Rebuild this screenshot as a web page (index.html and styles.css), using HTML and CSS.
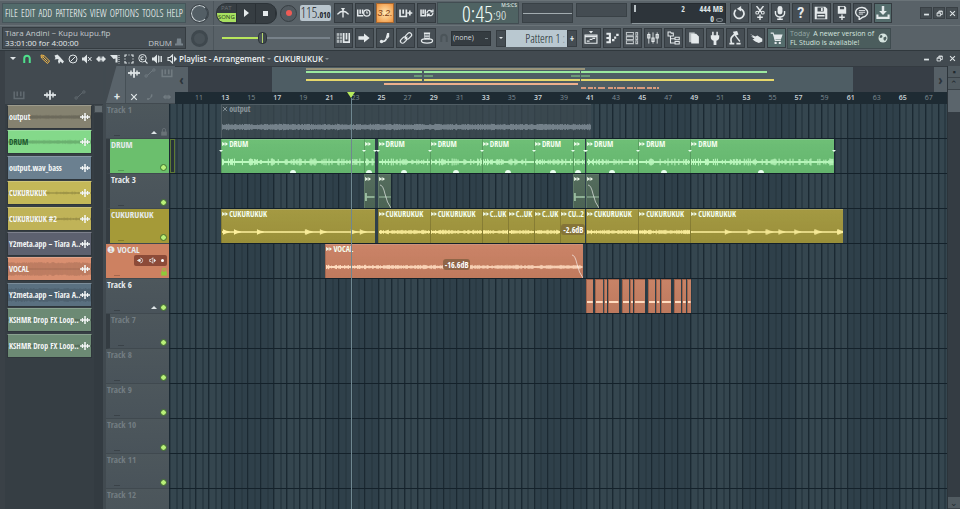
FILE: index.html
```html
<!DOCTYPE html>
<html lang="en">
<head>
<meta charset="utf-8">
<title>Playlist - Arrangement</title>
<link rel="stylesheet" href="styles.css">
</head>
<body>
<svg class="sprite" aria-hidden="true">
  <symbol id="i-wave" viewBox="0 0 20 20"><path d="M0 10h20" stroke-width="3"/><path d="M5 6v8M15 6v8" stroke-width="2.400"/><path d="M10 2v16" stroke-width="3"/></symbol>
  <symbol id="i-auto" viewBox="0 0 20 20"><circle cx="3.500" cy="15" r="2"/><circle cx="16.500" cy="5" r="2"/><path d="M5 14Q9 12 10 10T15 6"/></symbol>
  <symbol id="i-piano" viewBox="0 0 20 20"><path d="M2 4v12h16V4M7 4v8M13 4v8" stroke-width="2.500"/></symbol>
  <symbol id="i-metro" viewBox="0 0 20 20"><path d="M2 12Q6 7.500 10 7.500T18 12M10 5.500v11" stroke-width="2"/><path class="f" d="M7 3h6l-3 4z"/></symbol>
  <symbol id="i-wait" viewBox="0 0 20 20"><path d="M1 5v9h8M4.500 5v6M8 5v6" stroke-width="2.200"/><circle cx="14" cy="10" r="4.500" stroke-width="1.800"/><path d="M14 7.500V10h2"/></symbol>
  <symbol id="i-overdub" viewBox="0 0 20 20"><path d="M1.500 5v10h9V5M6 5v6M12 10h7M15.500 6.500v7" stroke-width="2.400"/></symbol>
  <symbol id="i-looprec" viewBox="0 0 20 20"><path d="M1.500 5v9h6V5M4.500 5v6" stroke-width="2.200"/><path d="M10 10a4 4 0 0 1 7-2.500M18.500 10a4 4 0 0 1-7 2.500M15 8.500h3.500V5M14 11.500h-3.500V15" stroke-width="1.800"/></symbol>
  <symbol id="i-step" viewBox="0 0 20 20"><path class="f" opacity=".65" d="M1 3h8v14H1z"/><path d="M1 7.500h8M1 12h8M5 3v14" stroke="#39434a" stroke-width=".8"/><path d="M11 3v13h8V3M15 3v9" stroke-width="2.400"/></symbol>
  <symbol id="i-arrow" viewBox="0 0 20 20"><path class="f" d="M2 7.500h8V3.500l8 6.500-8 6.500v-4H2z"/></symbol>
  <symbol id="i-slide" viewBox="0 0 20 20"><path d="M4 15h3Q11 14.500 12 10.500" stroke-width="2.500"/><circle class="f" cx="5" cy="15" r="2.400"/><path class="f" d="M13 3h3v5l-2 3-3-1z"/></symbol>
  <symbol id="i-link" viewBox="0 0 20 20"><rect x="8.500" y="4" width="10" height="6" rx="3" transform="rotate(-45 13.500 7)" stroke-width="1.800"/><rect x="1.500" y="10" width="10" height="6" rx="3" transform="rotate(-45 6.500 13)" stroke-width="1.800"/><path d="M8 12l4-4"/></symbol>
  <symbol id="i-hat" viewBox="0 0 20 20"><path class="f" d="M5.500 2h9l-1 10h-7z"/><ellipse cx="10" cy="14" rx="8" ry="3.200" stroke-width="1.800"/><path d="M6.500 5.500h7M7 9h6" stroke="#59636a"/></symbol>
  <symbol id="i-playlist" viewBox="0 0 20 20"><path class="f" d="M7 0h6l-3 3.500z"/><path d="M1.500 6h17v11.500h-17zM1.500 8h17M4 14.500h4M8 12h4M12 10.500h4" stroke-width="1.700"/></symbol>
  <symbol id="i-roll" viewBox="0 0 20 20"><path d="M2 4h5M2 10h5M2 16h5M7 2.500v15" stroke-width="3"/><path d="M10 13h3.500M13 9.500h3M16 5.500h3.500" stroke-width="3"/></symbol>
  <symbol id="i-rack" viewBox="0 0 20 20"><path d="M2 2h10v4H2zM2 8h10v4H2zM2 14h10v4H2zM15.500 2h2.500v4h-2.500zM15.500 8h2.500v4h-2.500zM15.500 14h2.500v4h-2.500z" opacity=".75"/></symbol>
  <symbol id="i-mixer" viewBox="0 0 20 20"><path d="M4 2v16M10 2v16M16 2v16" stroke-width="1.200"/><path d="M2.500 5h3v5h-3zM8.500 10h3v5h-3zM14.500 5h3v5h-3z" stroke-width="1.600"/></symbol>
  <symbol id="i-tree" viewBox="0 0 20 20"><path d="M1.500 1.500h3.500l1 1.500h3v4h-7.500zM5 8v9h6M5 11h6M11.500 9h6v3.500h-6zM11.500 15h6v3.500h-6z"/></symbol>
  <symbol id="i-pages" viewBox="0 0 20 20"><path class="f" d="M3 2h8v14H3z" opacity=".7"/><path class="f" d="M6 4h7l4 4v10H6z"/></symbol>
  <symbol id="i-plug" viewBox="0 0 20 20"><path class="f" d="M4 6h12v3q0 4-4 5v6H8v-6q-4-1-4-5z"/><path d="M7 1v6M13 1v6" stroke-width="2.200"/></symbol>
  <symbol id="i-arm" viewBox="0 0 20 20"><path d="M2 18h7M12 18h6M5 17Q3 11 6 8l4-4" stroke-width="2.400"/><path class="f" d="M7 1l6-1 2 5-5 2z"/><path d="M10 6l7 9" stroke-width="1.800"/></symbol>
  <symbol id="i-hand" viewBox="0 0 20 20"><path class="f" d="M1 4l8 4 3-1.500 7 4.500v4l-5 2-5-2-4-3 3-1-2-1.500-3-1.500 3-.5z"/></symbol>
  <symbol id="i-cart" viewBox="0 0 20 20"><path class="f" d="M5 5h13l-2.500 7H7z"/><path d="M1 3h3.500l3 10.500h8"/><circle class="f" cx="8" cy="17" r="1.700"/><circle class="f" cx="14" cy="17" r="1.700"/></symbol>
  <symbol id="i-undo" viewBox="0 0 20 20"><path d="M5.500 5.500A7 7 0 1 0 12 4" stroke-width="2.500"/><path class="f" d="M13 0v8L7 4z"/></symbol>
  <symbol id="i-cut" viewBox="0 0 20 20"><path d="M5 0l7 9M15 0L8 9M10 12v8M6 16h8" stroke-width="2"/><circle cx="6" cy="9.500" r="2"/><circle cx="14" cy="9.500" r="2"/></symbol>
  <symbol id="i-mic" viewBox="0 0 20 20"><rect class="f" x="6.500" y="0" width="7" height="12" rx="3.500"/><path d="M3.500 7v3.500a6.500 5 0 0 0 13 0V7M10 15v4M6 19h8" stroke-width="2"/></symbol>
  <symbol id="i-save" viewBox="0 0 20 20"><path class="f" fill-rule="evenodd" d="M1 1h15l3 3v15H1zM5 2v6h9V2zM4 11v7h12v-7z"/><path class="f" d="M10 3h2.500v4H10zM5 13h10v2H5z"/></symbol>
  <symbol id="i-savenew" viewBox="0 0 20 20"><path class="f" fill-rule="evenodd" d="M4 0h10l2 2v9H4zM7 1v3.500h6V1z"/><path d="M10 12v8M6 16h8" stroke-width="2"/></symbol>
  <symbol id="i-chat" viewBox="0 0 20 20"><path d="M6 15.500A8.500 7 0 1 1 11 16L6 19.500z" stroke-width="2"/><path d="M5.500 6.500h9M5.500 9h9M5.500 11.500h6" stroke-width="1.300"/></symbol>
  <symbol id="i-down" viewBox="0 0 20 20"><path d="M10 0v8" stroke-width="3.500"/><path class="f" d="M4.500 7h11L10 13z"/><path d="M2 12v5h16v-5" stroke-width="3"/></symbol>
  <symbol id="i-magnet" viewBox="0 0 20 20"><path d="M4.500 18V9a5.500 5.500 0 0 1 11 0v9" stroke-width="4"/></symbol>
  <symbol id="i-pencil" viewBox="0 0 20 20"><path d="M2 2l6 1 11 11-4 5L3 8zM5 5l10 10M8 3L3 8" stroke-width="2"/></symbol>
  <symbol id="i-brush" viewBox="0 0 20 20"><path class="f" d="M1 3l6-2 5 5-3 4-8 1 2-3zM9 10l3-4 8 9-3 4-4-4-3 5-2-5z"/></symbol>
  <symbol id="i-ban" viewBox="0 0 20 20"><circle cx="10" cy="10" r="8" stroke-width="2"/><path d="M15 5L5 15" stroke-width="2"/></symbol>
  <symbol id="i-mute" viewBox="0 0 20 20"><path class="f" d="M0 7h4l6-6v18l-6-6H0z"/><path d="M12 6l7 8M19 6l-7 8" stroke-width="2"/></symbol>
  <symbol id="i-slip" viewBox="0 0 20 20"><path d="M2 10h16M7.500 5v10M12.500 5v10" stroke-width="2.500"/><path class="f" d="M6 4v12l-6-6zM14 4v12l6-6z"/></symbol>
  <symbol id="i-knife" viewBox="0 0 20 20"><path class="f" d="M0 2h15v15h-4V9L7 10z"/><path d="M18 2v17" stroke-width="2" stroke-dasharray="2 2"/></symbol>
  <symbol id="i-select" viewBox="0 0 20 20"><path d="M2 6V2h4M14 2h4v4M18 14v4h-4M6 18H2v-4M9 2h2M9 18h2M2 9v2M18 9v2" stroke-width="2.300"/></symbol>
  <symbol id="i-zoom" viewBox="0 0 20 20"><circle cx="9" cy="8.500" r="7.500" stroke-width="2"/><path d="M14 14l5 5M11 6.500a3 3 0 1 0 0 4" stroke-width="2.200"/></symbol>
  <symbol id="i-play" viewBox="0 0 20 20"><path class="f" d="M0 7h4l6-6v18l-6-6H0z"/><path d="M13 3v14M16 4v12M19 4v12" stroke-width="1.800"/></symbol>
  <symbol id="i-speaker" viewBox="0 0 20 20"><path d="M2 7h4l5-5v16l-5-5H2z" stroke-width="2.200"/><path class="f" d="M14 4l6 6-6 6z"/></symbol>
  <symbol id="i-monitor" viewBox="0 0 20 20"><circle class="f" cx="7" cy="10" r="4"/><path d="M9 3a7 7 0 1 1 0 14M0 10h5" stroke-width="2"/></symbol>
  <symbol id="i-min" viewBox="0 0 20 20"><path d="M3 13h14" stroke-width="5"/></symbol>
  <symbol id="i-restore" viewBox="0 0 20 20"><path d="M3 8h10v9H3zM3 9h10M8 7V3h10v10h-4M8 4h10" stroke-width="2.500"/></symbol>
  <symbol id="i-close" viewBox="0 0 20 20"><path d="M3 3l14 14M17 3L3 17" stroke-width="3"/></symbol>
  <symbol id="i-lock" viewBox="0 0 20 20"><path class="f" d="M3 9h14v10H3z"/><path d="M6 10V5a4 4 0 0 1 8 0v5" stroke-width="2"/></symbol>
  <symbol id="i-globe" viewBox="0 0 20 20"><circle class="f" cx="10" cy="10" r="9"/><path d="M4 5l4-1 1 4-3 2-3-1zM11 9l5-2 1 4-3 5-3-3z" fill="#4d605f" stroke="none"/></symbol>
  <symbol id="i-clip" viewBox="0 0 20 20"><path d="M2 4v12M10 5v10" stroke-width="3"/><path class="f" d="M3 5l6 5-6 5zM12 4l8 6-8 6z"/></symbol>
  <symbol id="i-stack" viewBox="0 0 20 20"><path class="f" d="M5 1h10l1 13h4v5H0v-5h4z"/></symbol>
</svg>

<header class="toolbar">
  <div class="bar">
    <nav class="menu" aria-label="Main menu">
      <button>FILE</button><button>EDIT</button><button>ADD</button><button>PATTERNS</button><button>VIEW</button><button>OPTIONS</button><button>TOOLS</button><button>HELP</button>
    </nav>
    <div class="knob-cell"><div class="knob lit"></div></div>
    <div class="transport">
      <div class="deck">
        <button class="mode"><span class="pat">PAT</span><span class="song">SONG</span></button>
        <button class="deck-btn" aria-label="Play"><span class="tri"></span></button>
        <button class="deck-btn" aria-label="Stop"><span class="sq"></span></button>
      </div>
      <button class="record" aria-label="Record"><span></span></button>
      <button class="tempo"><b>115</b><small>.010</small></button>
    </div>
    <div class="icons five" data-icons="metro wait count overdub looprec"></div>
    <div class="clock"><span>0:45</span><div><em>M:S:CS</em><small>:90</small></div></div>
    <div class="scopes"><div class="scope"><hr></div><div class="scope short"></div></div>
    <div class="cpu"><span class="cpu-tick"></span><span class="voices">2</span><span class="mem">444 MB<br>0 <i></i></span></div>
    <div class="icons eight" data-icons="undo cut mic help save savenew chat down*"></div>
    <div class="window-btns app" data-window></div>
  </div>
  <div class="bar">
    <div class="hint">
      <span>Tiara Andini ~ Kupu kupu.flp</span>
      <div><span>33:01:00 for 4:00:00</span><span class="hint-name">DRUM <svg><use href="#i-stack"/></svg></span></div>
    </div>
    <div class="knob-cell"><div class="knob"></div></div>
    <div class="transport"><input class="slider" type="range" min="0" max="100" value="36" aria-label="Song position"></div>
    <div class="icons five" data-icons="step arrow slide link hat"></div>
    <div class="pattern">
      <svg class="snap"><use href="#i-magnet"/></svg>
      <select class="none" aria-label="Snap"><option>(none)</option></select>
      <button class="pbtn" aria-label="Pattern menu"><span class="caret"></span></button>
      <button class="pname">Pattern 1 <i>:</i></button>
      <button class="pbtn">+</button>
    </div>
    <div class="icons ten" data-icons="playlist roll rack mixer tree pages plug arm hand cart*"></div>
    <a class="news" href="#"><span><i>Today</i>&ensp;A newer version of<br>FL Studio is available!</span><svg><use href="#i-globe"/></svg></a>
  </div>
</header>

<main class="window">
  <div class="titlebar">
    <div class="tools" id="tools"></div>
    <h1>Playlist - Arrangement</h1><span class="caret dim"></span><h1>CUKURUKUK</h1><span class="caret dim"></span>
    <div class="window-btns" data-window></div>
  </div>
  <div class="body">
    <aside class="picker">
      <div class="picker-tabs"><svg class="off"><use href="#i-piano"/></svg><svg><use href="#i-wave"/></svg><svg class="off"><use href="#i-auto"/></svg></div>
      <div class="picker-main"><div class="sources" id="sources"></div><div class="vscroll"><span></span></div></div>
    </aside>
    <section class="playlist">
      <div class="head">
        <div class="corner">
          <div class="add">+</div>
          <div class="corner-grid"><svg><use href="#i-wave"/></svg><svg class="off"><use href="#i-auto"/></svg><svg class="off"><use href="#i-piano"/></svg><svg class="small"><use href="#i-close"/></svg><svg class="off small"><use href="#i-slide"/></svg><svg class="off small"><use href="#i-slip"/></svg></div>
        </div>
        <div class="timebar">
          <div class="overview"><button aria-label="Scroll left">‹</button><div class="map" id="map"></div><button aria-label="Scroll right">›</button></div>
          <div class="ruler"></div>
        </div>
      </div>
      <div class="arrange">
        <div class="headers" id="headers"></div>
        <div class="lanes" id="lanes"></div>
      </div>
    </section>
    <div class="rail"><div class="dot">▪</div><div class="up">⌃</div><div class="track"><span></span></div><div class="up">⌄</div></div>
  </div>
</main>
<script src="app.js"></script>
</body>
</html>
```

FILE: styles.css
```css
* { box-sizing: border-box; }
:root {
  --span: 59.7;
  --row: 35px;
  --ui: "Open Sans Condensed", "Roboto Condensed", Roboto, sans-serif;
  --light: "Open Sans Condensed Light", "Open Sans Condensed", Roboto, sans-serif;
}
html, body { height: 100%; }
body { margin: 0; display: flex; flex-direction: column; overflow: hidden; background: #41494f; color: #dfe5e7; font-family: var(--ui); font-size: 9px; line-height: 12px; }
button, select, input { margin: 0; padding: 0; border: 0; background: none; color: inherit; font: inherit; }
svg { fill: none; stroke: currentColor; stroke-width: 1.5; width: 10px; height: 10px; flex: none; }
.f { fill: currentColor; stroke: none; }
.sprite { position: absolute; width: 0; height: 0; }
i { font-style: normal; }
h1 { margin: 0; font: 600 8px/12px "Open Sans", sans-serif; color: #eef2f3; }
.caret { border: 3px solid transparent; border-top: 3px solid currentColor; border-bottom: 0; }
.caret.dim { color: #8a9397; border-width: 2px; border-bottom: 0; margin: 0 3px 0 2px; }

/* toolbar */
.toolbar { flex: none; background: #596268; border-bottom: 1px solid #30383d; }
.bar { display: flex; height: 25px; align-items: center; padding-left: 2px; border-top: 1px solid #6a7378; }
.menu { width: 184px; height: 20px; background: #526b6b; border: 1px solid #46555a; display: flex; justify-content: space-between; align-items: center; padding: 0 2px; font: 10px/16px var(--light); color: #fff; }
.hint { width: 184px; height: 22px; background: #454d53; border: 1px solid #353c41; padding: 0 2px; font: 8px/10px "Open Sans", sans-serif; color: #c4cacd; white-space: nowrap; }
.hint div { display: flex; justify-content: space-between; color: #e4e9eb; }
.hint-name { display: flex; gap: 3px; color: #c4cacd; }
.hint-name svg { width: 8px; height: 8px; color: #77828a; }
.knob-cell { width: 27px; display: flex; justify-content: center; }
.knob { width: 17px; height: 17px; border-radius: 50%; background: #4a5359; border: 3px solid #3f484e; }
.knob.lit { border: 1px solid #c9d1d4; border-right-color: #39424a; background: #535e65; outline: 1px solid #3c444a; }
.transport { width: 120px; height: 100%; display: flex; align-items: center; padding: 0 2px; border-left: 1px solid #4c555b; }
.deck { display: flex; height: 21px; width: 61px; border-radius: 10px; overflow: hidden; background: #363d42; border: 1px solid #2c3338; flex: none; }
.deck > * { flex: 1; display: flex; align-items: center; justify-content: center; border-right: 1px solid #2a3035; }
.mode { flex-direction: column; font: 6px/9px "Open Sans", sans-serif; align-items: stretch; text-align: center; }
.pat { color: #697075; }
.song { background: #a8e060; color: #25381c; border-radius: 0 0 0 6px; }
.tri { border: 4px solid transparent; border-left: 5px solid #e6ebed; border-right: 0; }
.sq { width: 5px; height: 5px; background: #e6ebed; }
.record { width: 17px; height: 17px; border-radius: 50%; border: 1px solid #373e43; background: #525a60; margin: 0 3px; flex: none; display: grid; place-items: center; }
.record span { width: 6px; height: 6px; border-radius: 50%; background: #ee5b55; }
.tempo { flex: 1; height: 16px; background: #b9c5cd; color: #18222a; border-radius: 2px; display: flex; align-items: baseline; justify-content: center; }
.tempo b { font: 14px/15px var(--light); }
.tempo small { font: 8px/10px var(--ui); }
.slider { appearance: none; width: 108px; height: 14px; margin-left: 6px; background: linear-gradient(90deg, #b8e65c 36%, #78828a 36%) center / 100% 2px no-repeat; }
.slider::-webkit-slider-thumb { appearance: none; width: 9px; height: 12px; border-radius: 4px; border: 1px solid #2d3439; background: linear-gradient(90deg, #4b5459 3px, #b4d66b 3px 4px, #3e474c 4px); }
.icons { display: grid; gap: 2px; grid-auto-flow: column; grid-auto-columns: 1fr; padding: 0 1px; }
.icons button { height: 20px; background: #464e54; border: 1px solid #343b40; color: #e4e9eb; display: grid; place-items: center; }
.icons svg { width: 14px; height: 14px; }
.icons .active { background: #546c6c; }
.icons .count { background: radial-gradient(#ffe9b5, #f0913a); color: #7c3a12; font: italic 9px/10px "Liberation Sans", sans-serif; border-color: #a7672f; }
.icons .help { font: bold 14px/16px Roboto, sans-serif; }
.five { width: 104px; }
.eight { width: 164px; margin-left: 3px; }
.ten { width: 206px; }
.clock { width: 82px; height: 22px; background: #4f6363; border: 1px solid #424d52; color: #f0fcf7; display: flex; justify-content: flex-end; padding-right: 1px; font: 22px/20px var(--light); }
.clock div { display: flex; flex-direction: column; width: 24px; }
.clock small { font-size: 13px; line-height: 16px; }
.clock em { align-self: flex-end; font: normal 5px/4px "Open Sans", sans-serif; }
.scopes { display: flex; gap: 3px; width: 112px; padding: 0 3px; border-right: 1px solid #4a5358; }
.scope { flex: 1; height: 20px; background: #444c52; border: 1px solid #394146; display: flex; align-items: center; }
.scope.short { height: 14px; }
.scope hr { border: 0; height: 1px; background: #a3acb0; width: 100%; margin: 0; }
.cpu { width: 95px; height: 21px; background: #2d343a; border: 1px solid #252b30; border-bottom: 1px solid #8c969b; display: flex; justify-content: space-between; padding: 0 2px; font-size: 8px; line-height: 10px; }
.cpu-tick { width: 2px; height: 7px; background: #b8c0c4; margin-top: 1px; }
.voices { flex: 1; text-align: right; }
.mem { width: 38px; text-align: right; }
.mem i { display: inline-block; width: 7px; height: 4px; border: 1px solid #788187; border-radius: 50%; }
.window-btns { margin-left: auto; display: flex; gap: 1px; padding-right: 2px; }
.window-btns button { width: 12px; height: 12px; display: grid; place-items: center; }
.window-btns.app button { background: #454d52; border: 1px solid #394045; }
.window-btns svg { width: 7px; height: 7px; }
.pattern { width: 144px; display: flex; align-items: center; height: 18px; }
.snap { color: #4b5459; margin: 0 2px 0 2px; }
.none { appearance: none; width: 40px; height: 15px; background: linear-gradient(#7b858b, #7b858b) 33px 6px / 3px 1px no-repeat #353c41; border: 1px solid #2d3338; color: #d4dadd; padding-left: 1px; font: 7px/12px "Open Sans", sans-serif; margin-right: 5px; }
.pbtn { width: 10px; height: 17px; background: #444c52; border: 1px solid #363d42; display: grid; place-items: center; font-size: 10px; }
.pbtn .caret { border-width: 2px; border-bottom: 0; }
.pname { flex: 1; height: 17px; background: #b9c8d0; color: #141e26; text-align: right; padding-right: 2px; font: 12px/15px var(--light); white-space: nowrap; }
.pbtn:last-child { margin-right: 4px; }
.pname i { color: #7d8b93; }
.news { flex: none; width: 104px; height: 21px; background: #4b5d5d; border: 1px solid #3f4b4f; color: #d5e4df; text-decoration: none; display: flex; align-items: center; justify-content: space-between; padding: 0 2px; font: 7px/9px "Open Sans", sans-serif; white-space: nowrap; }
.news i { color: #97a8a7; }

/* playlist window */
.window { flex: 1; min-height: 0; display: flex; flex-direction: column; border-left: 5px solid #3a4147; }
.titlebar { flex: none; height: 15px; display: flex; align-items: center; background: #424a50; }
.tools { display: flex; align-items: center; gap: 3px; margin: 0 2px 0 5px; }
.tools button { width: 11px; height: 11px; display: grid; place-items: center; }
.tools svg { width: 10px; height: 10px; }
.tools .green { color: #4fe08c; margin: 0 4px 0 2px; }
.amber { color: #f0b648; }
.tools .gap { margin-left: 1px; }
.body { flex: 1; min-height: 0; display: flex; }
.picker { width: 98px; flex: none; display: flex; flex-direction: column; background: #363e44; }
.picker-tabs { height: 38px; flex: none; background: #424a50; display: flex; justify-content: space-between; align-items: flex-end; padding: 0 17px 3px 8px; }
.picker-tabs svg { width: 12px; height: 12px; }
.off { color: #626b71; }
.picker-main { flex: 1; display: flex; gap: 2px; padding: 1px 0 0 2px; }
.sources { width: 85px; height: 254px; display: grid; grid-auto-rows: 1fr; }
.source { position: relative; display: flex; align-items: center; justify-content: space-between; height: 24px; padding: 0 1px; border: 1px solid #2f363b; border-top-color: #ffffff33; font-size: 8px; color: #f4f7f7; text-align: left; white-space: nowrap; overflow: hidden; }
.source .dark { color: #1c5a2c; }
.source span, .source .ico { position: relative; }
.source .ico { width: 10px; height: 10px; }
.source .wf { position: absolute; inset: 4px 0; width: 100%; height: 14px; color: #00000028; }
.vscroll { width: 9px; background: #333b41; }
.vscroll span { display: block; height: 8px; background: #626b70; border: 1px solid #41494e; }
.playlist { flex: 1; min-width: 0; display: flex; flex-direction: column; border-left: 3px solid #414a50; }
.head { flex: none; height: 38px; display: flex; }
.corner { width: 69px; flex: none; display: flex; padding-bottom: 1px; background: #424a50; }
.add { width: 19px; background: #59636a; clip-path: polygon(55% 0, 100% 0, 100% 100%, 0 100%); display: flex; align-items: flex-end; justify-content: flex-end; padding: 0 5px 0 0; font: bold 11px/12px Roboto, sans-serif; }
.corner-grid { flex: 1; background: #566067; border-left: 1px solid #465056; display: grid; grid-template-columns: repeat(3, 1fr); align-content: space-between; justify-items: center; padding: 1px 0 0 0; }
.corner-grid svg { width: 12px; height: 12px; }
.corner-grid .small { width: 8px; height: 12px; }
.corner-grid .off { color: #727c82; }
.timebar { flex: 1; min-width: 0; display: flex; flex-direction: column; }
.overview { height: 26px; display: flex; border-top: 1px solid #343b41; }
.overview button { width: 13px; background: #566067; color: #2c343a; font-size: 14px; }
.map { position: relative; flex: 1; background: #373e46; }
.map .view { position: absolute; top: 0; bottom: 0; background: #4e5d64; }
.map .mini { position: absolute; height: 2px; }
.ruler { flex: 1; background: #1e2b33; }
.arrange { position: relative; flex: 1; min-height: 0; display: flex; }
.headers { width: 63px; flex: none; overflow: hidden; }
.th { position: relative; height: var(--row); background: linear-gradient(#4d575c, #49535a); border-bottom: 1px solid #40494f; padding: 0 1px; color: #e6ebed; font-size: 9px; line-height: 12px; }
.th.child { border-left: 4px solid #343c42; }
.th.idle { color: #737d82; }
.th::after { content: ""; position: absolute; left: 8px; bottom: 2px; width: 6px; height: 1px; background: #0003; }
.led { position: absolute; right: 3px; bottom: 3px; width: 5px; height: 5px; border-radius: 50%; background: #b8f078; outline: 1px solid #4b7a34; }
.th .lock { position: absolute; right: 1px; bottom: 1px; width: 8px; height: 10px; color: #697277; }
.th .lock.on { color: #8fc93a; }
.fold { position: absolute; right: 12px; bottom: 4px; border: 3px solid transparent; border-bottom: 3px solid #dfe5e7; border-top: 0; }
.pill { position: absolute; right: 2px; top: 11px; width: 33px; height: 11px; border-radius: 2px; background: #8c4a38; display: flex; align-items: center; justify-content: space-around; }
.pill svg { width: 7px; height: 7px; }
.pill i { width: 3px; height: 3px; border-radius: 50%; background: #fff; }
.lanes { position: relative; flex: 1; min-width: 0; }
.grid { position: absolute; inset: 0; background:
  repeating-linear-gradient(180deg, transparent 0 34px, #14212a 34px 35px),
  repeating-linear-gradient(90deg, #1b2932 0 1px, transparent 1px calc(100% / var(--span))),
  repeating-linear-gradient(90deg, #2a3a43 0 2px, transparent 2px calc(50% / var(--span))),
  repeating-linear-gradient(90deg, #35464f 0 calc(400% / var(--span)), #2f404a 0 calc(800% / var(--span))); }
.tick { position: absolute; top: -12px; font: 7px/12px "Open Sans", sans-serif; color: #7f8c93; }
.tick.major { color: #ccd4d8; font-weight: 600; }
.clip { position: absolute; height: 34px; overflow: hidden; border-left: 1px solid #00000028; border-top: 1px solid #ffffff30; background-image: linear-gradient(#ffffff08, #0000000c); }
.clip header { display: flex; align-items: center; gap: 1px; height: 8px; font-size: 8px; line-height: 8px; color: #f4fff0; white-space: nowrap; }
.clip header svg { width: 6px; height: 6px; }
.clip .wf { position: absolute; left: 0; top: 12px; width: 100%; height: 20px; }
.clip .fade { position: absolute; right: 0; bottom: 0; width: 12px; height: 24px; color: #ffffff99; stroke-width: 1; }
.wf { stroke-width: 1; }
.drum { background-color: #69bd72; color: #c1fcc3; }
.cuku { background-color: #a1963c; color: #fff2a0; }
.vocal { background-color: #c98062; color: #ffdcc0; }
.chop { background-color: #c67f62; color: #ffdcc0; border-color: #a0624a; }
.chop .wf { stroke-width: 2; }
.fx { background-color: #4f6858; color: #9fc2a5; border-color: #5d7866; }
.muted { background: #3f4b52b8; color: #74818a; border-color: #505d64; }
.muted header { color: #8b969c; }
.marker { position: absolute; border: 2px solid transparent; border-top: 2px solid #eafff0; border-bottom: 0; margin-left: -2px; }
.dome { position: absolute; width: 6px; height: 3px; border-radius: 3px 3px 0 0; background: #eafff0; margin-left: -3px; }
.badge { position: absolute; padding: 0 2px; border-radius: 3px; background: #857438; color: #fff; font-size: 8px; line-height: 11px; }
.badge.warm { background: #8f6547; }
.playhead { position: absolute; top: -6px; bottom: 0; width: 1px; background: #6f8790; }
.playhead::before { content: ""; position: absolute; left: -4px; top: -6px; border: 4px solid transparent; border-top: 6px solid #b6ec5c; border-bottom: 0; }
.meter { position: absolute; left: 1px; width: 5px; height: 34px; border: 1px solid #5d7a35; background: #27323a; }
.rail { width: 13px; flex: none; display: flex; flex-direction: column; background: #343c43; border-left: 1px solid #2c343a; }
.rail .dot, .rail .up { height: 12px; background: #515b61; color: #20282e; text-align: center; border-bottom: 1px solid #3a4248; }
.rail .track { flex: 1; }
.rail .track span { display: block; height: 22px; background: #5b656c; }
```

FILE: app.js
```js
const START = 9, SPAN = 59.7, ROW = 35;
const icon = (name, cls = "") => `<svg class="${cls}"><use href="#i-${name}"/></svg>`;
const at = bar => ((bar - START) / SPAN * 100) + "%";
const width = (a, b) => ((b - a) / SPAN * 100) + "%";

let seed = 7;
function rand() {
  seed = (seed * 16807) % 2147483647;
  return seed / 2147483647;
}

// One vertical stroke per pixel; each kind has its own envelope.
function wave(px, kind) {
  let d = "M0 10H" + px, hit = 1;
  for (let x = 0; x < px; x++) {
    let h;
    if (kind === "drum") h = rand() < 0.45 ? 2 + rand() * 1.6 : 1;
    else if (kind === "sparse") { hit = rand() < 0.07 ? 2.6 : hit * 0.8; h = Math.max(hit, 0.5); }
    else if (kind === "flat") h = 2 + rand() * 1.2;
    else if (kind === "hit") h = x < 2 ? 4 : 0.7;
    else if (kind === "full") h = 8 + rand() * 2;
    else h = 0.8 + rand() * 1.4;
    d += `M${x + 0.5} ${(10 - h).toFixed(1)}V${(10 + h).toFixed(1)}`;
  }
  return `<svg class="wf" viewBox="0 0 ${px} 20" preserveAspectRatio="none"><path d="${d}"/></svg>`;
}

document.querySelectorAll("[data-icons]").forEach(box => {
  box.innerHTML = box.dataset.icons.split(" ").map(raw => {
    const name = raw.replace("*", "");
    if (name === "count") return `<button class="count">3.2.</button>`;
    if (name === "help") return `<button class="help">?</button>`;
    return `<button class="${raw.endsWith("*") ? "active" : ""}" aria-label="${name}">${icon(name)}</button>`;
  }).join("");
});
document.querySelectorAll("[data-window]").forEach(box => {
  box.innerHTML = ["min", "restore", "close"].map(n => `<button aria-label="${n}">${icon(n)}</button>`).join("");
});
document.getElementById("tools").innerHTML = `<span class="caret"></span>` +
  [["magnet", "green"], ["pencil", "amber"], ["brush"], ["ban"], ["mute"], ["slip"], ["knife"], ["select"], ["zoom"], ["play"], ["speaker", "gap"]]
    .map(([n, c = ""]) => `<button class="${c}" aria-label="${n}">${icon(n)}</button>`).join("");

const sources = [
  ["output", "#858270", "flat"], ["DRUM", "#84d98a", "flat"], ["output.wav_bass", "#6b8090", ""],
  ["CUKURUKUK", "#c4b858", "soft"], ["CUKURUKUK #2", "#c0b358", "soft"], ["Y2meta.app – Tiara A..", "#5d616f", ""],
  ["VOCAL", "#d98f70", "full"], ["Y2meta.app – Tiara A..", "#5a7080", "full"],
  ["KSHMR Drop FX Loop..", "#6c8a74", "soft"], ["KSHMR Drop FX Loop..", "#6c8a74", "soft"]
];
document.getElementById("sources").innerHTML = sources.map(([name, color, kind]) =>
  `<button class="source" style="background:${color}">${kind ? wave(84, kind) : ""}<span class="${name === "DRUM" ? "dark" : ""}">${name}</span>${icon("wave", "ico")}</button>`).join("");

const tracks = [
  { name: "Track 1", cls: "idle", extra: `<i class="fold"></i>${icon("lock", "lock")}`, led: false },
  { name: "DRUM", cls: "child", color: "#6bbf6d" }, { name: "Track 3", cls: "child" },
  { name: "CUKURUKUK", cls: "child", color: "#a59a38" },
  { name: "❶ VOCAL", cls: "", color: "#cd8161", led: false,
    extra: `<span class="pill">${icon("monitor")}${icon("speaker")}<i></i></span>${icon("lock", "lock on")}` },
  { name: "Track 6", cls: "", extra: `<i class="fold"></i>` }, { name: "Track 7", cls: "idle child" },
  ...[8, 9, 10, 11, 12].map(n => ({ name: "Track " + n, cls: "idle" }))
];
document.getElementById("headers").innerHTML = tracks.map(t =>
  `<div class="th ${t.cls}"${t.color ? ` style="background:${t.color}"` : ""}>${t.name}${t.extra || ""}${t.led === false ? "" : `<i class="led"></i>`}</div>`).join("");

const clips = [[0, "muted", 13, 41.4, "output", "flat"]];
[[13, 24, "DRUM"], [24, 24.8, ""], [25, 29, "DRUM"], [29, 33, "DRUM"], [33, 37, "DRUM"], [37, 40, "DRUM"], [40, 40.9, ""], [41, 45, "DRUM"], [45, 49, "DRUM"], [49, 60, "DRUM"]]
  .forEach(([a, b, n]) => clips.push([1, "drum", a, b, n, "drum"]));
[[24, 24.8], [25, 26], [40, 40.9], [41, 42]].forEach(([a, b], i) => clips.push([2, "fx", a, b, "", i % 2 ? "line" : "hit"]));
[[13, 24.8, "CUKURUKUK"], [25, 29, "CUKURUKUK"], [29, 33, "CUKURUKUK"], [33, 35, "C..UK"], [35, 37, "C..UK"], [37, 39, "C..UK"], [39, 40.9, "CU..2"], [41, 45, "CUKURUKUK"], [45, 49, "CUKURUKUK"], [49, 60.75, "CUKURUKUK"]]
  .forEach(([a, b, n]) => clips.push([3, "cuku", a, b, n, b - a > 5 ? "sparse" : "soft"]));
clips.push([4, "vocal", 21, 40.75, "VOCAL", "soft"]);
const chops = [[41, 41.52], [41.7, 42.29], [42.37, 42.6], [42.72, 43.52], [43.75, 44.31], [44.39, 44.64], [44.72, 45.54], [45.75, 46.31], [46.39, 46.64], [46.75, 47.54], [47.74, 48.3], [48.38, 48.67], [48.74, 49.02]];
chops.forEach(([a, b]) => clips.push([5, "chop", a, b, null, "line"]));

let html = `<div class="grid"></div>`;
for (let bar = 11; bar < 68; bar += 2)
  html += `<span class="tick ${bar % 4 === 1 ? "major" : ""}" style="left:${at(bar)}">${bar}</span>`;
for (const [row, cls, a, b, name, kind] of clips) {
  const px = Math.round((b - a) * 13);
  const body = kind === "line" ? `<svg class="wf" viewBox="0 0 ${px} 20" preserveAspectRatio="none"><path d="M0 10H${px}"/></svg>` : wave(px, kind);
  const fade = cls === "vocal" || (cls === "fx" && kind === "line") ? `<svg class="fade" viewBox="0 0 12 24"><path d="M1 1Q4 1 6 10T12 24"/></svg>` : "";
  html += `<div class="clip ${cls}" style="left:${at(a)};width:${width(a, b)};top:${row * ROW}px">` +
    (name === null ? "" : `<header>${icon(cls === "muted" ? "close" : "clip")}${name}</header>`) + body + fade + `</div>`;
}
for (const bar of [13, 24, 24.8, 25, 29, 33, 37, 40, 40.9, 41, 45, 49, 60])
  html += `<i class="marker" style="left:${at(bar)};top:46px"></i>`;
for (const bar of [18.5, 24.35, 27, 31, 35, 38.5, 40.4, 43, 47, 54.4])
  html += `<i class="dome" style="left:${at(bar)};top:66px"></i>`;
html += `<span class="badge" style="left:${at(39.1)};top:120px">-2.6dB</span>`;
html += `<span class="badge warm" style="left:${at(30)};top:155px">-16.6dB</span>`;
html += `<i class="meter" style="top:${ROW}px"></i><i class="playhead" style="left:${at(23)}"></i>`;
document.getElementById("lanes").innerHTML = html;

const mapAt = bar => (bar - 1) / 76 * 100;
const rows = { 0: [1, "#9a957b"], 1: [4, "#9be89f"], 2: [8, "#6b9a77"], 3: [12, "#e5d76c"], 4: [16, "#edb08d"], 5: [20, "#d99a7c"] };
document.getElementById("map").innerHTML = `<i class="view" style="left:${mapAt(9.55)}%;width:${59.2 / 76 * 100}%"></i>` +
  clips.map(([row, , a, b]) => `<i class="mini" style="left:${mapAt(a)}%;width:${(b - a) / 76 * 100}%;top:${rows[row][0]}px;background:${rows[row][1]}"></i>`).join("");
```
